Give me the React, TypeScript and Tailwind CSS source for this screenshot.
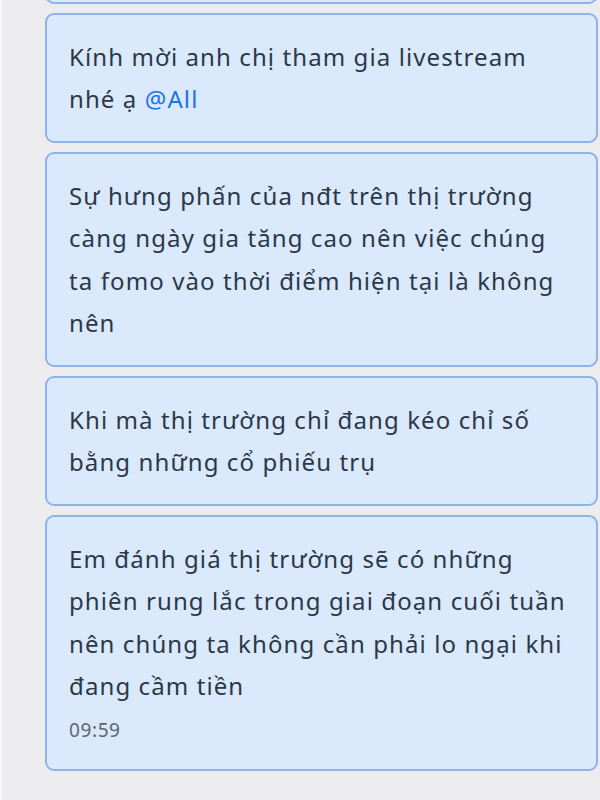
const messages = [
  'Sự hưng phấn của nđt trên thị trường càng ngày gia tăng cao nên việc chúng ta fomo vào thời điểm hiện tại là không nên',
  'Khi mà thị trường chỉ đang kéo chỉ số bằng những cổ phiếu trụ',
]

function Bubble({ children }: { children: React.ReactNode }) {
  return (
    <div className="rounded-[9px] border-2 border-[#8db3e8] bg-[#dae9fc] py-[20.5px] pl-[22px] pr-[26px] text-[24px] leading-[42.5px] tracking-[1.1px] text-[#2b3849]">
      {children}
    </div>
  )
}

export default function App() {
  return (
    <div
      className="h-[800px] w-[600px] overflow-hidden border-l-2 border-[#f7f7f8] bg-[#ececee]"
      style={{ fontFamily: '"Noto Sans", "DejaVu Sans", sans-serif' }}
    >
      <div className="flex flex-col gap-[9px] pl-[43px] pr-[2px]">
        <div className="-mt-[60px] h-[64px] rounded-[9px] border-2 border-[#8db3e8] bg-[#dae9fc]" />
        <Bubble>
          Kính mời anh chị tham gia livestream nhé ạ <span className="text-[#1a73e8]">@All</span>
        </Bubble>
        {messages.map((m, i) => (
          <Bubble key={i}>{m}</Bubble>
        ))}
        <Bubble>
          Em đánh giá thị trường sẽ có những phiên rung lắc trong giai đoạn cuối tuần nên chúng ta không cần phải lo ngại khi
          đang cầm tiền
          <div className="mt-[4px] text-[19px] leading-[37px] tracking-[0.6px] text-[#5b6778]">09:59</div>
        </Bubble>
      </div>
    </div>
  )
}
